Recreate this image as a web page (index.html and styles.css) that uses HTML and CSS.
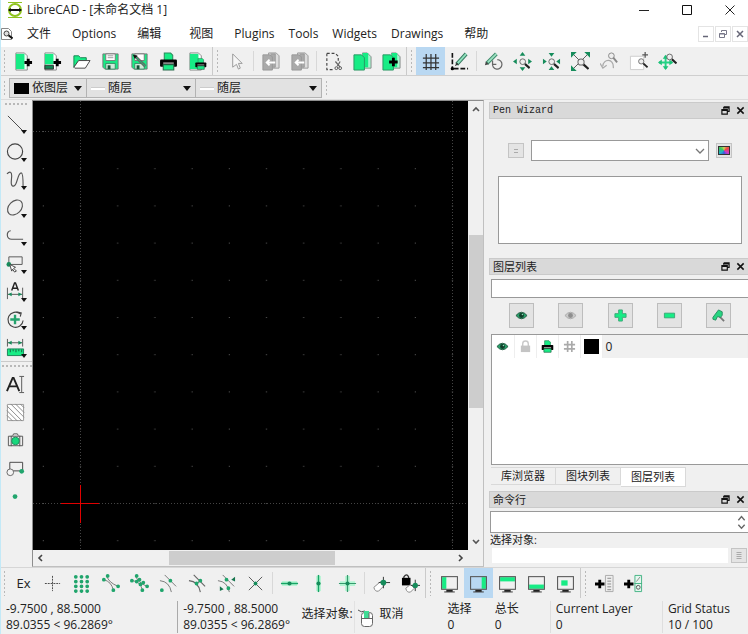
FILE: index.html
```html
<!DOCTYPE html>
<html lang="zh-CN">
<head>
<meta charset="utf-8">
<meta name="viewport" content="width=device-width, initial-scale=1">
<title>LibreCAD - [未命名文档 1]</title>
<link rel="stylesheet" href="styles.css">
</head>
<body>
<svg class="sprite" aria-hidden="true">
  <symbol id="lens" viewBox="0 0 12 12"><path d="M6.5 6.5l5 4.5" stroke="#222" stroke-width="2.2"/><circle cx="4.2" cy="4.2" r="3" fill="#eee" stroke="#666"/></symbol>
  <symbol id="caret" viewBox="0 0 8 5"><path d="M0 0h8L4 5z" fill="#111"/></symbol>
  <symbol id="float" viewBox="0 0 10 10"><path d="M3 1h6v5H7M3 1v2M3 2h6M1 4h6v5H1zM1 5h6" fill="none" stroke="#111" stroke-width="1.3"/></symbol>
  <symbol id="close" viewBox="0 0 10 10"><path d="M1.5 1.5l7 7m0-7l-7 7" stroke="#111" stroke-width="1.7"/></symbol>
  <symbol id="eye" viewBox="0 0 14 10"><path d="M1 5Q7-2 13 5Q7 12 1 5z" fill="#28a06b" stroke="#245840"/><circle cx="7" cy="5" r="2.6" fill="#123f2b"/><circle cx="8" cy="4" r=".8" fill="#8fe0b8"/></symbol>
  <symbol id="eye-off" viewBox="0 0 14 10"><path d="M1 5Q7-2 13 5Q7 12 1 5z" fill="#c9c9c9" stroke="#aaa"/><circle cx="7" cy="5" r="2.6" fill="#8e8e8e"/></symbol>
  <symbol id="printer" viewBox="0 0 18 18"><path d="M5 1h6l2 2v5H5z" fill="#17ec85" stroke="#2a8a5c"/><rect x="1" y="7" width="16" height="7" rx="1" fill="#050505"/><path d="M4 10.500h10" stroke="#ddd"/><path d="M4 12h10v5H4z" fill="#17ec85" stroke="#2a6a4c"/></symbol>
  <symbol id="monitor" viewBox="0 0 18 18"><path d="M6 15h6v2H6z" fill="#222"/><path d="M4 17h10" stroke="#444"/><rect x="1.500" y="2.500" width="15" height="12" fill="none" stroke="#555"/></symbol>
</svg>
<div class="app">
  <header class="titlebar">
    <svg class="logo" viewBox="0 0 16 16"><circle cx="8" cy="8" r="6" fill="none" stroke="#8fc31f" stroke-width="2"/><path d="M1 .5h14M1 15.500h14" stroke="#8fc31f"/><path d="M2 8h12" stroke="#111" stroke-width="2"/><path d="M1 8l3-2v4zM15 8l-3-2v4z" fill="#111"/></svg>
    <h1>LibreCAD - [未命名文档 1]</h1>
    <div class="winctl">
      <button aria-label="最小化"><svg viewBox="0 0 10 10"><path d="M0 5.500h10" stroke="#222"/></svg></button>
      <button aria-label="最大化"><svg viewBox="0 0 10 10"><path d="M.5.5h9v9h-9z" fill="none" stroke="#111"/></svg></button>
      <button aria-label="关闭"><svg viewBox="0 0 10 10"><path d="M.5.5l9 9m0-9l-9 9" stroke="#222"/></svg></button>
    </div>
  </header>
  <nav class="menubar">
    <svg class="docicon" viewBox="0 0 12 14"><path d="M.5 1.500h7l3 3v8H.5z" fill="#fff" stroke="#888"/><path d="M6.500 7.500l5 4" stroke="#111" stroke-width="2"/><circle cx="5.500" cy="6.500" r="2.500" fill="#ddd" stroke="#444"/></svg>
    <button class="wide">文件</button><button>Options</button><button class="wide">编辑</button><button class="wide">视图</button><button>Plugins</button><button>Tools</button><button>Widgets</button><button>Drawings</button><button class="wide">帮助</button>
    <div class="mdi">
      <button aria-label="最小化文档"><svg viewBox="0 0 10 10"><path d="M2 7.500h5" stroke="#667" stroke-width="1.500"/></svg></button>
      <button aria-label="还原文档"><svg viewBox="0 0 10 10"><path d="M3.500 3V1.500h5v4H7M1.500 4.500h5v4h-5zM1.500 5h5" fill="none" stroke="#778"/></svg></button>
      <button aria-label="关闭文档"><svg viewBox="0 0 10 10"><path d="M2 2l6 6m0-6l-6 6" stroke="#667" stroke-width="1.500"/></svg></button>
    </div>
  </nav>

  <div class="toolbar" role="toolbar" aria-label="文件">
    <span class="handle"></span>
    <button aria-label="新建"><svg viewBox="0 0 20 20"><path d="M2 1h9l3 3v15H2z" fill="#e8fff4" stroke="#888"/><path d="M2 2h9v16H2z" fill="#17ec85"/><path d="M15 7v8M11 11h8" stroke="#000" stroke-width="3"/></svg></button>
    <button aria-label="从模板新建"><svg viewBox="0 0 20 20"><path d="M2 1h9l3 3v15H2z" fill="#fff" stroke="#888"/><path d="M2 2h9v11H2z" fill="#17ec85"/><path d="M2 14h9v4H2z" fill="#128552" stroke="#333"/><path d="M15 7v8M11 11h8" stroke="#000" stroke-width="3"/></svg></button>
    <button aria-label="打开"><svg viewBox="0 0 20 20"><path d="M2 16V4h5l2 2h6v3H7z" fill="#17ec85" stroke="#168452"/><path d="M2 16l5-7h12l-5 8H3z" fill="#fff" stroke="#444"/></svg></button>
    <button aria-label="保存"><svg viewBox="0 0 20 20"><path d="M2 2h16v16H4l-2-2z" fill="#17ec85" stroke="#777"/><path d="M5 2h10v7H5z" fill="#fff" stroke="#777"/><path d="M7 4h6M7 6h6" stroke="#999"/><path d="M5 12h10v6H5z" fill="#cfead9" stroke="#368d66"/><path d="M7 14h3v4H7z" fill="#174f37"/></svg></button>
    <button aria-label="另存为"><svg viewBox="0 0 20 20"><path d="M2 2h16v16H4l-2-2z" fill="#17ec85" stroke="#777"/><path d="M5 2h10v7H5z" fill="#fff" stroke="#777"/><path d="M5 12h10v6H5z" fill="#cfead9" stroke="#368d66"/><path d="M7 14h3v4H7z" fill="#174f37"/><path d="M5 4l11 11" stroke="#666" stroke-width="3"/><path d="M5 4l11 11" stroke="#21bd75"/><path d="M3 3l5 1-3 3z" fill="#111"/></svg></button>
    <button aria-label="打印"><svg><use href="#printer"/></svg></button>
    <button aria-label="打印预览"><svg viewBox="0 0 20 20"><path d="M2 1h9l3 3v15H2z" fill="#fff" stroke="#888"/><path d="M2 2h9v16H2z" fill="#17ec85"/><use href="#printer" x="7" y="6" width="13" height="13"/></svg></button>
    <span class="end"></span><span class="handle"></span>
    <button aria-label="选择"><svg viewBox="0 0 20 20"><path d="M6 2v14l4-3 2 5 2-1-2-5h4z" fill="#f6f6f6" stroke="#999"/></svg></button>
    <span class="sep"></span>
    <button aria-label="剪切到左" disabled><svg viewBox="0 0 20 20"><path d="M8 1h8l3 3v13H8z" fill="#ddd" stroke="#999"/><path d="M2 3h7l3 2v14H2zM10 2h5v14h-3" fill="#aaa" stroke="#999"/><path d="M6 11h9M9 8l-3 3 3 3" fill="none" stroke="#fff" stroke-width="2"/></svg></button>
    <button aria-label="复制到左" disabled><svg viewBox="0 0 20 20"><path d="M8 1h8l3 3v13H8z" fill="#ddd" stroke="#999"/><path d="M2 3h7l3 2v14H2zM10 2h5v14h-3" fill="#aaa" stroke="#999"/><path d="M6 11h9M9 8l-3 3 3 3" fill="none" stroke="#fff" stroke-width="2"/></svg></button>
    <span class="sep"></span>
    <button aria-label="剪切"><svg viewBox="0 0 20 20"><path d="M3 1.500h9l3 3v5M3 1.500v17h8" fill="none" stroke="#444" stroke-width="1.200" stroke-dasharray="3 2"/><path d="M12 10l5 6M17 10l-3 5" stroke="#666" stroke-width="1.300"/><circle cx="13" cy="17" r="1.500" fill="none" stroke="#555"/><circle cx="17" cy="17" r="1.500" fill="none" stroke="#555"/></svg></button>
    <button aria-label="复制"><svg viewBox="0 0 20 20"><path d="M10 1h5l4 4v12h-7z" fill="#a5f7cf" stroke="#888"/><path d="M10 1h6v15h-5z" fill="#17ec85"/><path d="M1 3h8l3 3v13H1z" fill="#17ec85" stroke="#299663"/></svg></button>
    <button aria-label="粘贴"><svg viewBox="0 0 20 20"><path d="M10 1h5l4 4v12h-7z" fill="#a5f7cf" stroke="#888"/><path d="M10 1h6v15h-5z" fill="#17ec85"/><path d="M1 3h8l3 3v13H1z" fill="#17ec85" stroke="#299663"/><path d="M12 6v9M7.500 10.500h9" stroke="#000" stroke-width="3"/></svg></button>
    <span class="end"></span><span class="handle"></span>
    <button class="on" aria-label="网格"><svg viewBox="0 0 20 20"><path d="M5.500 2v17M10.500 2v17M15.500 2v17M2 6.500h17M2 11.500h17M2 16.500h17" stroke="#333" stroke-width="1.300"/></svg></button>
    <button aria-label="草图模式"><svg viewBox="0 0 20 20"><path d="M2.500 1v16M4 17.500h15" stroke="#111" stroke-width="1.700" stroke-dasharray="5 2"/><path d="M7 13L17 2" stroke="#377960" stroke-width="4"/><path d="M8 12L17 2" stroke="#8fe1bd" stroke-width="2"/><path d="M5 15l4-2-2-2z" fill="#333"/><circle cx="2.500" cy="17.500" r="1.800"/></svg></button>
    <span class="sep"></span>
    <button aria-label="重绘"><svg viewBox="0 0 20 20"><path d="M3 12L13 2" stroke="#3c896a" stroke-width="4"/><path d="M4 11l9-9" stroke="#9be0c0" stroke-width="2"/><path d="M1 14l4-1-3-3z" fill="#444"/><path d="M14 8a5 5 0 1 1-5 4M9 9v4h4" fill="none" stroke="#666" stroke-width="1.300"/></svg></button>
    <button aria-label="放大"><svg viewBox="0 0 20 20"><path d="M10 0l3 4H7zM10 20l3-4H7zM0 10l4-3v6zM20 10l-4-3v6z" fill="#168c5b"/><use href="#lens" x="6" y="6" width="12" height="12"/></svg></button>
    <button aria-label="缩小"><svg viewBox="0 0 20 20"><path d="M10 5l3-4H7zM10 15l3 4H7zM5 10L1 7v6zM15 10l4-3v6z" fill="#168c5b"/><use href="#lens" x="6" y="6" width="12" height="12"/></svg></button>
    <button aria-label="自动缩放"><svg viewBox="0 0 20 20"><path d="M3 3l14 14M17 3L3 17" stroke="#555"/><path d="M0 0h6L0 6zM20 0h-6l6 6zM0 20v-6l6 6z" fill="#168c5b"/><use href="#lens" x="6" y="6" width="13" height="13"/></svg></button>
    <button aria-label="上一视图"><svg viewBox="0 0 20 20"><path d="M3 15C3 7 15 6 14 17M0 12l3 5 4-3" fill="none" stroke="#aaa" stroke-width="1.300"/><circle cx="12" cy="4" r="3" fill="#eee" stroke="#888"/><path d="M14 6l4 5" stroke="#888" stroke-width="2"/></svg></button>
    <button aria-label="窗口缩放"><svg viewBox="0 0 20 20"><path d="M1.500 4.500h14v14h-14z" fill="#fff" stroke="#ccc"/><path d="M17 0v6M14 3h6" stroke="#555" stroke-width="1.300"/><use href="#lens" x="9" y="6" width="11" height="11"/></svg></button>
    <button aria-label="平移"><svg viewBox="0 0 20 20"><path d="M8 4v14M1 11h14" stroke="#24d385" stroke-width="2"/><path d="M8 3l3 4H5zM8 19l3-4H5zM0 11l4-3v6zM16 11l-4-3v6z" fill="#1ec27a"/><use href="#lens" x="8" y="1" width="12" height="12"/></svg></button>
  </div>

  <div class="penbar">
    <span class="handle"></span>
    <label class="combo layer"><span class="swatch"></span><select aria-label="颜色"><option>依图层</option></select><svg><use href="#caret"/></svg></label>
    <label class="combo width"><span class="stroke"></span><select aria-label="线宽"><option>随层</option></select><svg><use href="#caret"/></svg></label>
    <label class="combo type"><span class="stroke"></span><select aria-label="线型"><option>随层</option></select><svg><use href="#caret"/></svg></label>
    <span class="handle"></span>
  </div>

  <main class="work">
    <div class="tools" role="toolbar" aria-label="绘图工具">
      <span class="grip"></span>
      <button aria-label="直线"><svg viewBox="0 0 20 20"><path d="M2 2l16 16" stroke="#444"/></svg></button>
      <button aria-label="圆"><svg viewBox="0 0 20 20"><circle cx="9.500" cy="10" r="8" fill="none" stroke="#444" stroke-width="1.200"/></svg></button>
      <button aria-label="曲线"><svg viewBox="0 0 20 20"><path d="M1 4C4 1 6 2 6 6S4 17 8 17s4-14 8-14c2 0 2 7 2 14" fill="none" stroke="#555" stroke-width="1.200"/></svg></button>
      <button aria-label="椭圆"><svg viewBox="0 0 20 20"><ellipse cx="9.500" cy="10" rx="9" ry="6.500" transform="rotate(-45 9.500 10)" fill="none" stroke="#555" stroke-width="1.200"/></svg></button>
      <button aria-label="多段线"><svg viewBox="0 0 20 20"><path d="M5 5C0 5 0 14 6 14h12" fill="none" stroke="#555" stroke-width="1.200"/></svg></button>
      <button aria-label="选择工具"><svg viewBox="0 0 20 20"><path d="M3 3h14v8H3z" fill="none" stroke="#555"/><circle cx="3" cy="11" r="2.500" fill="#168c5b"/><path d="M4 11l6 3-2 1 3 3-2 1-2-3-1 2z" fill="#fff" stroke="#444"/></svg></button>
      <button aria-label="标注"><svg viewBox="0 0 20 20"><path d="M1.500 6v12M17.500 6v12M2 13h15" stroke="#555"/><path d="M2 13l4-2v4zM17 13l-4-2v4z" fill="#168c5b"/><path d="M6 9l3-8h1l3 8M7.500 6.500h4" fill="none" stroke="#222" stroke-width="1.500"/></svg></button>
      <button aria-label="修改"><svg viewBox="0 0 20 20"><path d="M15 4a8 8 0 1 0 3 7M11 2l5 1-1 4" fill="none" stroke="#444" stroke-width="1.200"/><path d="M9.500 5v10M4.500 10h10" stroke="#26a26d" stroke-width="2.500"/></svg></button>
      <button aria-label="测量"><svg viewBox="0 0 20 20"><path d="M1.500 1v8M17.500 1v8M2 5h15" stroke="#555"/><path d="M2 5l4-2v4zM17 5l-4-2v4z" fill="#168c5b"/><path d="M1.500 11.500h17v7h-17z" fill="#17ec85" stroke="#198459"/><path d="M4.500 12v3M7.500 12v2M10.500 12v3M13.500 12v2M16.500 12v3" stroke="#175a3f"/></svg></button>
      <span class="grip split"></span>
      <button class="plain" aria-label="文字"><svg viewBox="0 0 20 20"><path d="M1 17L7 3h1l6 14M3.500 12h8" fill="none" stroke="#222" stroke-width="2"/><path d="M16.500 2v16M14 1.500h5M14 18.500h5" stroke="#555"/></svg></button>
      <button class="plain" aria-label="填充"><svg viewBox="0 0 20 20"><path d="M1.500 1.500h17v17h-17z" fill="#fff" stroke="#999"/><path d="M1 13l6 6M1 8l11 11M1 3l16 16M5 1l14 14M10 1l9 9M15 1l4 4" stroke="#888"/></svg></button>
      <button class="plain" aria-label="图像"><svg viewBox="0 0 20 20"><path d="M2.500 5.500h15v10h-15zM5.500 5v11M14.500 5v11M7 5l1-2h4l1 2" fill="#eee" stroke="#555"/><circle cx="10" cy="10.500" r="4" fill="#17d87c" stroke="#238d60"/></svg></button>
      <button class="plain" aria-label="图块"><svg viewBox="0 0 20 20"><path d="M4 3.500h13.500v9H4z" fill="none" stroke="#444"/><circle cx="4.500" cy="14" r="3.500" fill="#f4f4f4" stroke="#666"/><circle cx="16.500" cy="13" r="2.500" fill="#21a56d"/></svg></button>
      <button class="plain" aria-label="点"><svg viewBox="0 0 20 20"><circle cx="9.500" cy="10" r="2.500" fill="#21a56d"/></svg></button>
    </div>
    <div class="view">
      <svg class="canvas" role="img" aria-label="绘图区">
        <defs><pattern id="dots" x="9" y="30" width="37.200" height="37.200" patternUnits="userSpaceOnUse"><rect x=".8" width="1" height="1" fill="#606060"/></pattern></defs>
        <rect width="100%" height="100%" fill="url(#dots)"/>
        <path d="M47.500 0V900M419.500 0V900M0 30.500H1200M0 402.500H1200" stroke="#444" stroke-dasharray="1 2"/>
        <path d="M28 402.500h38M47.500 384v38" stroke="#e00000" shape-rendering="crispEdges"/>
      </svg>
      <div class="vbar"><svg viewBox="0 0 8 6"><path d="M1 5l3-3 3 3" fill="none" stroke="#555" stroke-width="1.600"/></svg><span></span><svg viewBox="0 0 8 6"><path d="M1 1l3 3 3-3" fill="none" stroke="#555" stroke-width="1.600"/></svg></div>
      <div class="hbar"><svg viewBox="0 0 6 8"><path d="M5 1L2 4l3 3" fill="none" stroke="#444" stroke-width="1.600"/></svg><span></span><svg viewBox="0 0 6 8"><path d="M1 1l3 3-3 3" fill="none" stroke="#444" stroke-width="1.600"/></svg></div>
    </div>
    <aside class="dock">
      <section class="wizard">
        <header class="head mono"><h2>Pen Wizard</h2><button aria-label="浮动"><svg><use href="#float"/></svg></button><button aria-label="关闭"><svg><use href="#close"/></svg></button></header>
        <div class="pick">
          <button class="mini" aria-label="添加"><svg viewBox="0 0 10 10"><path d="M3 3.500h4M3 6.500h4" stroke="#aaa"/></svg></button>
          <label class="drop"><select aria-label="收藏颜色"><option></option></select><svg viewBox="0 0 10 6"><path d="M1 1l4 4 4-4" fill="none" stroke="#777" stroke-width="1.300"/></svg></label>
          <button class="mini" aria-label="调色板"><span class="palette"></span></button>
        </div>
        <div class="favs"></div>
      </section>
      <section class="layers">
        <header class="head"><h2>图层列表</h2><button aria-label="浮动"><svg><use href="#float"/></svg></button><button aria-label="关闭"><svg><use href="#close"/></svg></button></header>
        <input class="filter" type="text" aria-label="图层过滤">
        <div class="actions">
          <button aria-label="显示全部"><svg><use href="#eye"/></svg></button>
          <button aria-label="隐藏全部"><svg><use href="#eye-off"/></svg></button>
          <button aria-label="添加图层"><svg viewBox="0 0 14 14"><path d="M5 1h4v4h4v4H9v4H5V9H1V5h4z" fill="#17ec85" stroke="#3aa876"/></svg></button>
          <button aria-label="删除图层"><svg viewBox="0 0 14 14"><path d="M1.500 4.500h11v5h-11z" fill="#17ec85" stroke="#3aa876"/></svg></button>
          <button aria-label="编辑图层"><svg viewBox="0 0 14 14"><path d="M8 8l5 5" stroke="#777" stroke-width="2"/><path d="M1 9l6-8 4 2v4L9 9 6 8l-2 4-3-1z" fill="#27d581" stroke="#278c60"/></svg></button>
        </div>
        <div class="list">
          <table><tbody><tr>
            <td><svg class="eye"><use href="#eye"/></svg></td>
            <td><svg viewBox="0 0 14 14"><path d="M4 7V4a3 3 0 0 1 6 0v3" fill="none" stroke="#c9c9c9" stroke-width="1.500"/><path d="M2 6h10v7H2z" fill="#c4c4c4"/></svg></td>
            <td><svg><use href="#printer"/></svg></td>
            <td><svg viewBox="0 0 14 14"><path d="M5 1v12M9.500 1v12M1 5h12M1 9.500h12" stroke="#aaa" stroke-width="1.800"/></svg></td>
            <td><span class="chip"></span></td>
            <td class="name">0</td>
          </tr></tbody></table>
        </div>
        <div class="tabs" role="tablist"><button role="tab">库浏览器</button><button role="tab">图块列表</button><button role="tab" class="sel" aria-selected="true">图层列表</button></div>
      </section>
      <section class="command">
        <header class="head"><h2>命令行</h2><button aria-label="浮动"><svg><use href="#float"/></svg></button><button aria-label="关闭"><svg><use href="#close"/></svg></button></header>
        <div class="history"><svg viewBox="0 0 10 16"><path d="M1.500 6L5 2l3.500 4M1.500 11L5 15l3.500-4" fill="none" stroke="#666" stroke-width="1.500"/></svg></div>
        <label for="cmd">选择对象:</label>
        <div class="entry"><input id="cmd" type="text"><button class="mini" aria-label="命令选项"><svg viewBox="0 0 10 10"><path d="M2.500 1.500h5M2.500 3.500h5M2.500 5.500h5M2.500 7.500h5" stroke="#aaa"/></svg></button></div>
      </section>
    </aside>
  </main>

  <div class="toolbar snap" role="toolbar" aria-label="捕捉">
    <span class="handle"></span>
    <button class="ex">Ex</button>
    <button aria-label="自由捕捉"><svg viewBox="0 0 20 20"><path d="M10 2v16M2 10h16" stroke="#444" stroke-dasharray="2 1"/></svg></button>
    <button aria-label="捕捉网格"><svg viewBox="0 0 20 20"><path d="M4 3v.01M4 8v.01M4 13v.01M4 18v.01M10 3v.01M10 8v.01M10 13v.01M10 18v.01M16 3v.01M16 8v.01M16 13v.01M16 18v.01" stroke="#20a56c" stroke-width="4" stroke-linecap="round"/></svg></button>
    <button aria-label="捕捉端点"><svg viewBox="0 0 20 20"><path d="M3 6Q11 8 13 17M6 2Q8 9 18 13" fill="none" stroke="#777"/><path d="M3 6v.01M7 2v.01M13 17v.01M18 13v.01" stroke="#20a56c" stroke-width="4" stroke-linecap="round"/></svg></button>
    <button aria-label="捕捉实体"><svg viewBox="0 0 20 20"><path d="M3 7Q11 8 13 17M6 2Q8 9 18 13" fill="none" stroke="#777"/><path d="M2 7v.01M7 2v.01M13 17v.01M18 13v.01M10 6v.01M14 9v.01M7 8v.01M11 11v.01" stroke="#20a56c" stroke-width="4" stroke-linecap="round"/></svg></button>
    <button aria-label="捕捉中心"><svg viewBox="0 0 20 20"><path d="M1 7Q11 8 13 19M6 1l12 12" fill="none" stroke="#777"/><path d="M12 7v.01M3 17v.01" stroke="#20a56c" stroke-width="4" stroke-linecap="round"/></svg></button>
    <button aria-label="捕捉中点"><svg viewBox="0 0 20 20"><path d="M1 7Q11 8 13 19M6 1l12 12M13 7l-5 4" fill="none" stroke="#666" stroke-width="1.200"/><path d="M13 7v.01M9 10v.01" stroke="#20a56c" stroke-width="4" stroke-linecap="round"/></svg></button>
    <button aria-label="捕捉距离"><svg viewBox="0 0 20 20"><path d="M1 7Q11 8 13 19M6 1l12 12" fill="none" stroke="#777"/><path d="M10 6v.01M12 15v.01" stroke="#20a56c" stroke-width="4" stroke-linecap="round"/><path d="M19 3v5l-4-2zM3 13v5l4-2z" fill="#16754e"/></svg></button>
    <button aria-label="捕捉交点"><svg viewBox="0 0 20 20"><path d="M3 3l14 14M17 3L3 17" stroke="#555"/><circle cx="10" cy="10" r="2" fill="#168c5b"/></svg></button>
    <span class="sep"></span>
    <button aria-label="限制水平"><svg viewBox="0 0 20 20"><path d="M2 10h16" stroke="#b3f5d3" stroke-width="5"/><path d="M1 10h18" stroke="#16a566" stroke-width="1.500"/><circle cx="10" cy="10" r="2.200" fill="#168c5b"/></svg></button>
    <button aria-label="限制垂直"><svg viewBox="0 0 20 20"><path d="M10 2v16" stroke="#b3f5d3" stroke-width="5"/><path d="M10 1v18" stroke="#16a566" stroke-width="1.500"/><circle cx="10" cy="10" r="2.200" fill="#168c5b"/></svg></button>
    <button aria-label="限制正交"><svg viewBox="0 0 20 20"><path d="M10 2v16M2 10h16" stroke="#b3f5d3" stroke-width="5"/><path d="M10 1v18M1 10h18" stroke="#369b6e" stroke-width="1.300"/><circle cx="10" cy="10" r="2.200" fill="#168c5b"/></svg></button>
    <span class="sep"></span>
    <button aria-label="相对零点"><svg viewBox="0 0 20 20"><path d="M2 14l7-6 4 4-6 6q-4 1-5-4z" fill="#fff" stroke="#888"/><path d="M12 3v12M7 9h12" stroke="#333"/><circle cx="12" cy="9" r="3" fill="#168c5b"/></svg></button>
    <button aria-label="锁定相对零点"><svg viewBox="0 0 20 20"><path d="M3 5V3q3-4 5 0v3" fill="none" stroke="#333" stroke-width="1.300"/><path d="M1 4h9v8H1z"/><path d="M5 15l5-4 4 4-4 4q-4 1-5-4z" fill="#fff" stroke="#888"/><path d="M15 6v12M10 12h10" stroke="#333"/><circle cx="15" cy="12" r="2.800" fill="#168c5b"/></svg></button>
    <span class="end"></span><span class="handle"></span>
    <button aria-label="左侧停靠"><svg viewBox="0 0 18 18"><path d="M2 3h4v11H2z" fill="#17ec85"/><use href="#monitor"/></svg></button>
    <button class="on" aria-label="右侧停靠"><svg viewBox="0 0 18 18"><path d="M12 3h4v11h-4z" fill="#17ec85"/><use href="#monitor"/></svg></button>
    <button aria-label="顶部停靠"><svg viewBox="0 0 18 18"><path d="M2 3h14v4H2z" fill="#17ec85"/><use href="#monitor"/></svg></button>
    <button aria-label="底部停靠"><svg viewBox="0 0 18 18"><path d="M2 10h14v4H2z" fill="#17ec85"/><use href="#monitor"/></svg></button>
    <button aria-label="浮动停靠"><svg viewBox="0 0 18 18"><path d="M5 6h6v5H5z" fill="#17ec85"/><use href="#monitor"/></svg></button>
    <span class="end"></span><span class="handle"></span>
    <button aria-label="添加菜单"><svg viewBox="0 0 20 20"><path d="M5 6v9M0 10.500h10" stroke="#000" stroke-width="3"/><path d="M11 1.500h8v17h-8z" fill="#eee" stroke="#aaa"/><path d="M13 4.500h4M13 7.500h4M13 10.500h4M13 13.500h4M13 16.500h4" stroke="#888"/></svg></button>
    <button aria-label="添加工具栏"><svg viewBox="0 0 20 20"><path d="M5 6v9M0 10.500h10" stroke="#000" stroke-width="3"/><path d="M11.500 1.500h7v17h-7zM11 10h8" fill="#e4f7ee" stroke="#43b384"/><path d="M13 8l4-5" stroke="#888"/><circle cx="15" cy="14" r="2" fill="none" stroke="#555"/></svg></button>
  </div>

  <footer class="status">
    <div>-9.7500 , 88.5000<br>89.0355 &lt; 96.2869°</div>
    <div class="rule">-9.7500 , 88.5000<br>89.0355 &lt; 96.2869°</div>
    <div class="mid">选择对象:</div>
    <div class="mid mouse"><svg viewBox="0 0 16 20"><path d="M0 3q3 3 7 1v2" fill="none" stroke="#555"/><rect x="3.500" y="5.500" width="11" height="14" rx="3" fill="#fff" stroke="#666"/><path d="M6 4h5v7H6z" fill="#40dc94"/><path d="M3.500 11.500h11M11 6v5" stroke="#666"/></svg>取消</div>
    <div>选择<br>0</div>
    <div>总长<br>0</div>
    <div class="faint">Current Layer<br>0</div>
    <div class="faint">Grid Status<br>10 / 100</div>
  </footer>
</div>
</body>
</html>
```
FILE: styles.css
```css
* { box-sizing: border-box; }
body {
  margin: 0;
  background: #f0f0f0;
  color: #222;
  font: 12px/16px "Open Sans", "Noto Sans CJK SC", sans-serif;
}
h1, h2 { margin: 0; font: inherit; }
button { padding: 0; border: 0; background: none; color: inherit; font: inherit; display: flex; align-items: center; justify-content: center; }
select, input { font: inherit; color: inherit; border-radius: 0; min-width: 0; }
select { appearance: none; border: 0; background: none; padding: 0; }
svg { display: block; flex: none; }
.sprite { display: none; }

.app { min-height: 100vh; display: flex; flex-direction: column; border-left: 1px solid #c3e9f7; overflow: hidden; }

.titlebar { height: 19px; display: flex; align-items: center; background: #fff; padding: 0 13px 0 6px; }
.logo { width: 16px; height: 16px; margin-right: 4px; }
.winctl { display: flex; gap: 33px; margin-left: auto; }
.winctl svg { width: 10px; height: 10px; }

.menubar { height: 28px; display: flex; align-items: center; background: #fff; padding-top: 2px; }
.docicon { width: 12px; height: 14px; }
.menubar > button { padding: 0 7px; height: 24px; }
.menubar > .wide { padding: 0 14px; }
.mdi { display: flex; gap: 1px; margin-left: auto; }
.mdi button { width: 16px; height: 16px; border: 1px solid #e4e4e4; }
.mdi svg { width: 10px; height: 10px; }

.toolbar { height: 29px; display: flex; align-items: stretch; border-bottom: 1px solid #cfcfcf; }
.toolbar button { width: 29px; }
.toolbar button svg { width: 19px; height: 19px; }
.toolbar .on { background: #b9d8f2; }
.handle {
  width: 3px; flex: none; margin: 2px 3px;
  background: radial-gradient(circle, #b8b8b8 1px, transparent 1px) 0 0 / 3px 4px;
}
.toolbar > .handle:first-child { margin-left: 2px; }
.sep { width: 1px; margin: 4px 2px; background: #d8d8d8; }
.end { width: 1px; background: #cacaca; }

.penbar { height: 24px; display: flex; padding: 2px 0 1px; border-bottom: 1px solid #dcdcdc; }
.penbar > .handle:first-child { margin-left: 2px; }
.combo { display: flex; align-items: center; background: #e2e2e2; border: 1px solid #b3b3b3; padding: 0 4px; }
.combo + .combo { border-left: 0; }
.combo select { flex: 1; width: 0; height: 18px; }
.combo svg { width: 8px; height: 5px; pointer-events: none; }
.layer { width: 78px; }
.width { width: 109px; }
.type { width: 126px; }
.swatch { width: 15px; height: 11px; background: #000; margin-right: 3px; }
.stroke { width: 14px; height: 3px; background: #fff; border-top: 1px solid #ccc; margin-right: 3px; }

.work { flex: 1; display: flex; min-height: 0; }
.tools { width: 31px; display: flex; flex-direction: column; }
.tools button { height: 28px; position: relative; margin-right: 2px; }
.tools button::after { content: ""; position: absolute; right: 3px; bottom: 3px; border: 3px solid transparent; border-top: 4px solid #111; border-bottom: 0; }
.tools .plain::after { display: none; }
.tools svg { width: 19px; height: 19px; }
.grip { height: 9px; margin: 0 3px; background: radial-gradient(circle, #b8b8b8 1px, transparent 1px) 0 2px / 4px 4px repeat-x; }
.grip.split { margin: 0; border-top: 1px solid #cacaca; }

.view {
  flex: 1; min-width: 0; display: grid;
  grid-template: minmax(0, 1fr) 16px / minmax(0, 1fr) 15px;
  border: 1px solid #8e8e8e; border-right-color: #c0c0c0; border-bottom-color: #c0c0c0;
}
.canvas { width: 100%; height: 100%; background: #000; }
.vbar { display: grid; grid-template-rows: 6px 124fr 174fr 132fr 6px; justify-items: center; padding: 5px 0; }
.vbar span { grid-row: 3; width: 14px; background: #cdcdcd; }
.vbar svg { width: 8px; height: 6px; }
.vbar svg:last-child { grid-row: 5; }
.hbar { display: grid; grid-template-columns: 6px 126fr 166fr 123fr 6px; align-items: center; padding: 0 4px; }
.hbar span { grid-column: 3; height: 14px; background: #cdcdcd; }
.hbar svg { width: 6px; height: 8px; }
.hbar svg:last-child { grid-column: 5; }

.dock { width: 264px; padding-left: 5px; padding-top: 2px; display: flex; flex-direction: column; font-size: 11px; }
.head { height: 17px; display: flex; align-items: center; background: #d9d9d9; border: 1px solid #cacaca; border-right: 0; padding-left: 3px; }
.head h2 { flex: 1; }
.head.mono { font-family: "Liberation Mono", monospace; font-size: 10px; }
.head button { width: 15px; height: 15px; }
.head svg { width: 9px; height: 9px; }
.pick { display: flex; align-items: center; gap: 7px; padding: 21px 16px 15px 19px; }
.mini { width: 16px; height: 15px; border: 1px solid #c4c4c4; background: #e4e4e4; flex: none; }
.mini svg { width: 10px; height: 10px; }
.drop { flex: 1; height: 21px; display: flex; align-items: center; background: #fff; border: 1px solid #999; padding-right: 3px; }
.drop select { flex: 1; height: 18px; }
.drop svg { width: 10px; height: 6px; pointer-events: none; }
.palette { width: 12px; height: 9px; border: 1px solid #333; background: conic-gradient(#d2d25a, #ed4444, #d13bc8, #3658dc, #22b3c7, #38c75c, #d2d25a); }
.favs { height: 68px; margin: 0 6px 14px 9px; background: #fff; border: 1px solid #999; }

.layers { flex: 1; display: flex; flex-direction: column; min-height: 0; }
.filter { height: 19px; margin: 4px 0 5px 2px; border: 1px solid #999; border-right: 0; background: #fff; }
.actions { display: flex; justify-content: space-between; padding: 0 17px 6px 20px; }
.actions button { width: 25px; height: 25px; border: 1px solid #bdbdbd; background: #e3e3e3; }
.actions svg { width: 13px; height: 13px; }
.list { flex: 1; margin-left: 2px; background: #fff; border: 1px solid #999; border-right: 0; }
.list table { width: 100%; border-collapse: collapse; }
.list td { width: 22px; height: 23px; padding: 0 3px; border-right: 1px solid #eee; }
.list td svg { width: 13px; height: 13px; margin: auto; }
.list .name { width: auto; background: #f0f0f0; font-size: 12px; }
.chip { display: block; width: 15px; height: 15px; background: #000; }
.tabs { display: flex; align-items: flex-start; padding: 2px 0 4px 2px; height: 26px; }
.tabs button { height: 18px; padding: 0 10px; border: 1px solid #d9d9d9; border-left: 0; }
.tabs .sel { height: 20px; background: #fff; }

.history { height: 22px; margin: 3px 0 0 1px; background: #fff; border: 1px solid #999; border-right: 0; display: flex; align-items: center; justify-content: flex-end; padding-right: 2px; }
.history svg { width: 9px; height: 16px; }
.command label { display: block; height: 15px; line-height: 14px; padding-left: 1px; }
.entry { display: flex; gap: 3px; padding: 0 1px 4px 3px; }
.entry input { flex: 1; height: 15px; border: 0; background: #fff; padding: 0 2px; }

.snap { height: 31px; border-top: 1px solid #d6d6d6; border-bottom: 0; }
.snap .ex { font-size: 13px; }
.status {
  height: 36px; display: grid; padding-top: 1px; align-items: center; white-space: nowrap; overflow: hidden;
  grid-template-columns: 176fr 119fr 58fr 88fr 47fr 60fr 112fr 86fr;
}
.status div { padding-left: 5px; min-width: 0; }
.status .rule { border-left: 1px solid #aaa; }
.status .mid { height: 32px; line-height: 26px; }
.status .faint { border-left: 1px solid #dedede; padding-left: 5px; }
.mouse { display: flex; gap: 5px; border-left: 1px solid #e2e2e2; }
.status .mouse { padding-left: 3px; }
.mouse svg { width: 16px; height: 20px; margin-top: 6px; }
```
